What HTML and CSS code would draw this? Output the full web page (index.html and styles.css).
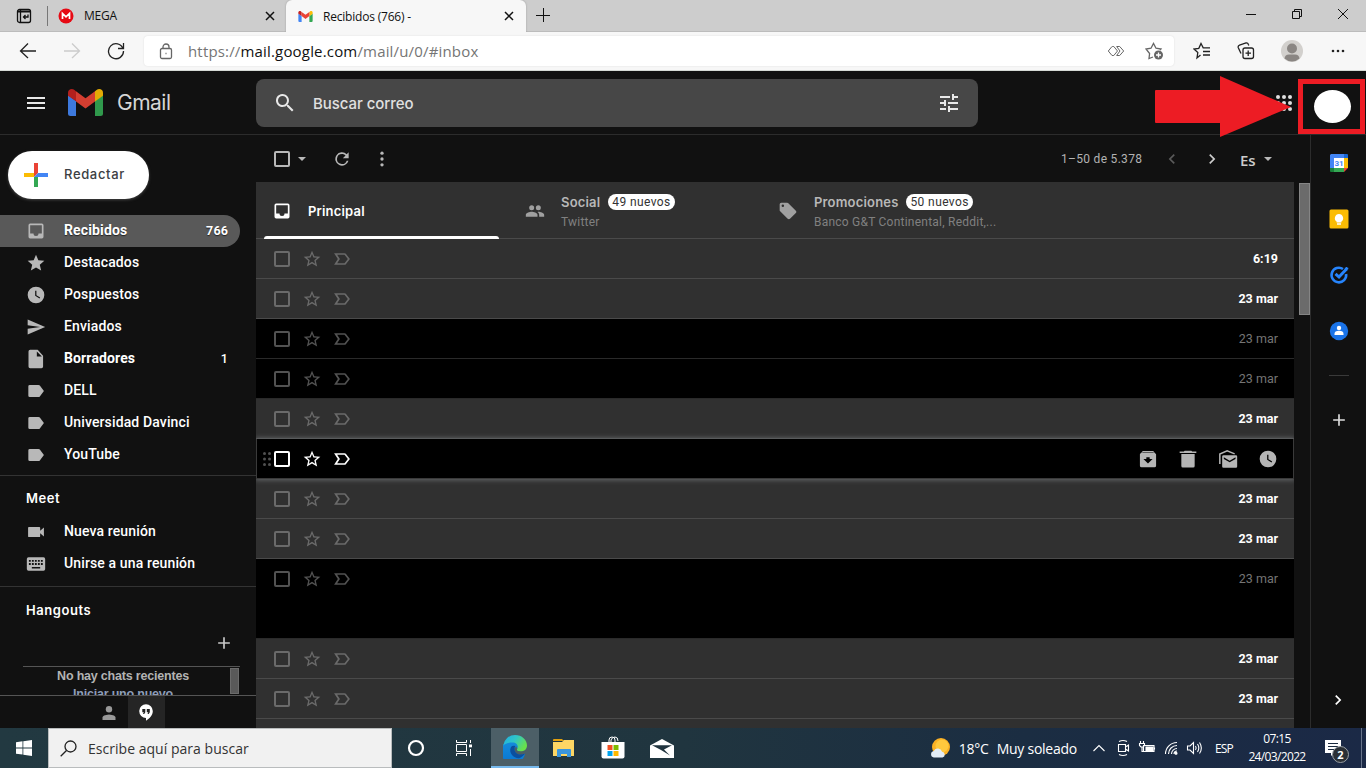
FILE: index.html
```html
<!DOCTYPE html>
<html lang="es">
<head>
  <meta charset="UTF-8">
  <meta name="viewport" content="width=device-width, initial-scale=1.0">
  <title>Recibidos (766) - Gmail</title>
  <link rel="stylesheet" href="styles.css">
</head>
<body>

  <!-- Iconos reutilizados -->
  <svg class="sprite">
    <symbol id="inbox" viewBox="0 0 24 24"><path d="M19 3H5a2 2 0 0 0-2 2v14a2 2 0 0 0 2 2h14a2 2 0 0 0 2-2V5a2 2 0 0 0-2-2zm0 12h-4a3 3 0 0 1-6 0H5V5h14v10z"/></symbol>
    <symbol id="star" viewBox="0 0 24 24"><path d="M12 17.27 18.18 21l-1.64-7.03L22 9.24l-7.19-.61L12 2 9.19 8.63 2 9.24l5.46 4.73L5.82 21z"/></symbol>
    <symbol id="star-line" viewBox="0 0 24 24"><path d="M22 9.24l-7.19-.62L12 2 9.19 8.63 2 9.24l5.46 4.73L5.82 21 12 17.27 18.18 21l-1.63-7.03L22 9.24zM12 15.4l-3.76 2.27 1-4.28-3.32-2.88 4.38-.38L12 6.1l1.71 4.04 4.38.38-3.32 2.88 1 4.28L12 15.4z"/></symbol>
    <symbol id="important" viewBox="0 0 24 24"><path d="M15 19H2.500l4.500-7L2.500 5H15c.65 0 1.260.31 1.630.84L21.500 12l-4.870 6.160c-.37.52-.98.84-1.630.84zm-8.800-2H15l4-5-4-5H6.200l3.300 5z"/></symbol>
    <symbol id="clock" viewBox="0 0 24 24"><path d="M12 2a10 10 0 1 0 0 20 10 10 0 0 0 0-20zm4.200 14.200L11 13V7h1.500v5.200l4.500 2.700z"/></symbol>
    <symbol id="send" viewBox="0 0 24 24"><path d="M2 21l21-9L2 3v7l15 2-15 2z"/></symbol>
    <symbol id="draft" viewBox="0 0 24 24"><path d="M5 1h9l6.500 7v13a2 2 0 0 1-2 2H5a2 2 0 0 1-2-2V3a2 2 0 0 1 2-2zm8 2v6h6z"/></symbol>
    <symbol id="label" viewBox="0 0 24 24"><path d="M16.600 5.400C16.300 5 15.700 4.700 15 4.700H4.500A1.700 1.700 0 0 0 2.800 6.400v11.200a1.700 1.700 0 0 0 1.700 1.700H15c.7 0 1.300-.3 1.600-.8L21.500 12z"/></symbol>
    <symbol id="chevron" viewBox="0 0 24 24"><path d="M10 6 8.600 7.400 13.200 12l-4.600 4.600L10 18l6-6z"/></symbol>
    <symbol id="plus" viewBox="0 0 24 24"><path d="M19 13h-6v6h-2v-6H5v-2h6V5h2v6h6z"/></symbol>
    <symbol id="gmail" viewBox="0 0 35 27">
      <path fill="#4285f4" d="M0 6l8 6v15H2.500A2.500 2.500 0 0 1 0 24.500z"/>
      <path fill="#34a853" d="M27 12l8-6v18.500a2.500 2.500 0 0 1-2.500 2.500H27z"/>
      <path fill="#c5221f" d="M0 3.700C0 .3 3.900-1 6.500 1L8 2.200v10L0 6.800z"/>
      <path fill="#fbbc04" d="M27 2.200 28.500 1C31.200-1 35 .4 35 3.700v3.100l-8 5.800z"/>
      <path fill="#ea4335" d="M8 2.200 17.500 9.300 27 2.200v10.300L17.500 19.500 8 12.500z"/>
    </symbol>
  </svg>

  <div class="tabstrip">
    <div class="tab-actions">
      <svg width="16" height="16" viewBox="0 0 16 16" fill="none" stroke="#111" stroke-width="1.300"><rect x="1.500" y="1.500" width="13" height="13" rx="2"/><path d="M1.500 3.500h13" stroke-width="2"/><path d="M4.500 1.500v13"/><path d="M12 6.500V9H7.500m2-2-2 2 2 2"/></svg>
    </div>
    <div class="tab">
      <svg width="16" height="16" viewBox="0 0 16 16"><circle cx="8" cy="8" r="7.500" fill="#e60a14"/><path d="M4.500 11V5.500L8 8.800l3.500-3.300V11" fill="none" stroke="#fff" stroke-width="1.700"/></svg>
      <span class="tab-title">MEGA</span>
      <svg class="close" width="10" height="10" viewBox="0 0 10 10"><path d="M1 1l8 8M9 1L1 9"/></svg>
    </div>
    <div class="tab active">
      <svg width="15" height="11"><use href="#gmail"/></svg>
      <span class="tab-title">Recibidos (766) -</span>
      <svg class="close" width="10" height="10" viewBox="0 0 10 10"><path d="M1 1l8 8M9 1L1 9"/></svg>
    </div>
    <svg class="new-tab" width="14" height="14" viewBox="0 0 14 14"><path d="M7.500 0v14M0 7.500h14"/></svg>
    <div class="window-controls">
      <svg width="12" height="12" viewBox="0 0 12 12"><path d="M1 6.500h10"/></svg>
      <svg width="12" height="12" viewBox="0 0 12 12"><path d="M1.500 3.500h7v7h-7zM3.500 3.500v-2h7v7h-2"/></svg>
      <svg width="12" height="12" viewBox="0 0 12 12"><path d="M1 1l10 10M11 1L1 11"/></svg>
    </div>
  </div>

  <div class="toolbar">
    <div class="nav-buttons">
      <svg width="18" height="18" viewBox="0 0 18 18"><path d="M17 9H1.500M9 1.500 1.500 9 9 16"/></svg>
      <svg class="disabled" width="18" height="18" viewBox="0 0 18 18"><path d="M1 9h15.500M9 1.500 16.500 9 9 16"/></svg>
      <svg width="18" height="18" viewBox="0 0 18 18"><path d="M16 6.500A7.500 7.500 0 1 0 16.500 9M16.500 1v5.500H11"/></svg>
    </div>
    <div class="address">
      <svg width="14" height="17" viewBox="0 0 14 17"><rect x="1.500" y="5.500" width="11" height="10" rx="1.500"/><path d="M4 5.500V4a3 3 0 0 1 6 0v1.500M6.500 10.500h1"/></svg>
      <div class="url">https://<b>mail.google.com</b>/mail/u/0/#inbox</div>
      <svg width="18" height="12" viewBox="0 0 18 12"><path d="M5.500 1.500h1.300l3.700 4.500-3.700 4.500H5L1.300 6 5 1.500zM9.500 1.500h3.200L16.700 6l-4 4.500H9.500M9.800 10.200 13 6 9.800 1.800" stroke-width="1"/></svg>
      <svg class="fav" width="19" height="18" viewBox="0 0 19 18"><path d="M8 15 4 16.500l.6-5L1 7l5-.8L8.500 1.500 11 6.200l5 .8-1 1.200"/><circle cx="13.500" cy="13" r="4.500" fill="#666" stroke="none"/><path d="M13.500 10.500v5M11 13h5" stroke="#fff"/></svg>
    </div>
    <div class="browser-tools">
      <svg width="18" height="18" viewBox="0 0 18 18"><path d="M7.500 13 4 16l.8-5.500L1 7l4.800-.7L8 1.500l2.200 4.300H17M10 9.500h7M10 13h7"/></svg>
      <svg width="18" height="18" viewBox="0 0 18 18"><rect x="6" y="6" width="10.500" height="10.500" rx="2"/><path d="M11.200 8.500v5.500M8.500 11.200H14M4 11.500 1.200 5.500a2 2 0 0 1 1.300-2.300L9 1a2 2 0 0 1 2.300 1.300l.5 1.200"/></svg>
      <svg class="solid" width="22" height="22" viewBox="0 0 22 22"><circle cx="11" cy="11" r="11" fill="#d2d0cd"/><circle cx="11" cy="8.500" r="5" fill="#8a8683"/><path d="M3.500 18.500Q4 14.500 8 14.500h6q4 0 4.500 4a11 11 0 0 1-15 0z" fill="#8a8683"/></svg>
      <svg class="solid" width="14" height="4" viewBox="0 0 14 4"><circle cx="2" cy="2" r="1.300"/><circle cx="7" cy="2" r="1.300"/><circle cx="12" cy="2" r="1.300"/></svg>
    </div>
  </div>

  <div class="gmail">
    <header class="header">
      <svg class="menu" width="18" height="12" viewBox="0 0 18 12"><path d="M0 1h18M0 6h18M0 11h18"/></svg>
      <svg class="logo" width="35" height="27"><use href="#gmail"/></svg>
      <span class="brand">Gmail</span>
      <div class="search">
        <svg width="24" height="24" viewBox="0 0 24 24"><path d="M15.500 14h-.8l-.3-.3A6.500 6.500 0 1 0 13.700 14.400l.3.300v.8l5 5 1.500-1.500zm-6 0a4.500 4.500 0 1 1 0-9 4.500 4.500 0 0 1 0 9z"/></svg>
        <span>Buscar correo</span>
        <svg width="24" height="24" viewBox="0 0 24 24"><path d="M3 17v2h6v-2H3zM3 5v2h10V5H3zm10 16v-2h8v-2h-8v-2h-2v6h2zM7 9v2H3v2h4v2h2V9H7zm14 4v-2H11v2h10zm-6-4h2V7h4V5h-4V3h-2v6z"/></svg>
      </div>
      <svg class="apps" width="16" height="16" viewBox="0 0 16 16"><circle cx="2" cy="2" r="2"/><circle cx="8" cy="2" r="2"/><circle cx="14" cy="2" r="2"/><circle cx="2" cy="8" r="2"/><circle cx="8" cy="8" r="2"/><circle cx="14" cy="8" r="2"/><circle cx="2" cy="14" r="2"/><circle cx="8" cy="14" r="2"/><circle cx="14" cy="14" r="2"/></svg>
    </header>

    <div class="content">
      <aside class="sidebar">
        <div class="compose">
          <svg width="24" height="24" viewBox="0 0 24 24"><path fill="#ea4335" d="M10 0h4v10l-4 4z"/><path fill="#4285f4" d="M14 10h10v4H10z"/><path fill="#34a853" d="M10 14h4v10h-4z"/><path fill="#fbbc04" d="M0 10h10v4H0z"/></svg>
          <span>Redactar</span>
        </div>
        <div class="folders">
          <div class="folder selected bold"><svg><use href="#inbox"/></svg><span>Recibidos</span><em>766</em></div>
          <div class="folder"><svg><use href="#star"/></svg><span>Destacados</span></div>
          <div class="folder"><svg><use href="#clock"/></svg><span>Pospuestos</span></div>
          <div class="folder"><svg><use href="#send"/></svg><span>Enviados</span></div>
          <div class="folder bold draft"><svg><use href="#draft"/></svg><span>Borradores</span><em>1</em></div>
          <div class="folder"><svg><use href="#label"/></svg><span>DELL</span></div>
          <div class="folder"><svg><use href="#label"/></svg><span>Universidad Davinci</span></div>
          <div class="folder"><svg><use href="#label"/></svg><span>YouTube</span></div>
        </div>
        <div class="meet">
          <h3>Meet</h3>
          <div class="folder"><svg viewBox="0 0 24 24"><path d="M17 10.500V7a1 1 0 0 0-1-1H3.500a1 1 0 0 0-1 1v10a1 1 0 0 0 1 1H16a1 1 0 0 0 1-1v-3.500l4.500 4v-11z"/></svg><span>Nueva reunión</span></div>
          <div class="folder"><svg viewBox="0 0 24 24"><path d="M3 4h18a2 2 0 0 1 2 2v12a2 2 0 0 1-2 2H3a2 2 0 0 1-2-2V6a2 2 0 0 1 2-2z"/><path d="M3.500 8.200h17M3.500 12h17" stroke="#111" stroke-width="2.200" stroke-dasharray="2.200 1.400"/><path d="M7 16.500h10" stroke="#111" stroke-width="1.800"/></svg><span>Unirse a una reunión</span></div>
        </div>
        <div class="hangouts">
          <h3>Hangouts</h3>
          <svg class="add"><use href="#plus"/></svg>
          <div class="chats">
            <div class="chats-text">No hay chats recientes<br><a>Iniciar uno nuevo</a></div>
            <div class="chats-thumb"></div>
          </div>
        </div>
        <div class="chat-tabs">
          <div class="chat-tab"><svg width="14" height="14" viewBox="0 0 14 14" fill="#999"><circle cx="7" cy="3.200" r="3.200"/><path d="M.5 14v-2.500Q.5 9 7 8.500q6.500.5 6.500 3V14z"/></svg></div>
          <div class="chat-tab current"><svg width="14" height="17" viewBox="0 0 14 17"><path fill="#fff" d="M7 .3a6.800 6.800 0 0 0 0 13.600v2.800c3.800-1.900 6.800-5.600 6.800-9.600A6.800 6.800 0 0 0 7 .3z"/><path fill="#222" d="M3.300 5h3v3.200L5.200 10H4l.8-1.700H3.300zM7.800 5h3v3.200L9.700 10H8.500l.8-1.700H7.800z"/></svg></div>
        </div>
      </aside>

      <main class="main">
        <div class="list-tools">
          <i class="box"></i>
          <i class="caret"></i>
          <svg class="refresh" viewBox="0 0 24 24"><path d="M17.650 6.350A8 8 0 1 0 19.730 14h-2.080A6 6 0 1 1 12 6c1.660 0 3.140.69 4.220 1.780L13 11h7V4z"/></svg>
          <svg viewBox="0 0 24 24"><circle cx="12" cy="5" r="2"/><circle cx="12" cy="12" r="2"/><circle cx="12" cy="19" r="2"/></svg>
          <span class="count">1–50 de 5.378</span>
          <svg class="prev"><use href="#chevron"/></svg>
          <svg class="next"><use href="#chevron"/></svg>
          <span class="lang">Es</span>
          <i class="caret"></i>
        </div>
        <div class="list-wrap">
          <div class="list">
            <div class="categories">
              <div class="category current">
                <svg><use href="#inbox"/></svg>
                <div class="category-name">Principal</div>
              </div>
              <div class="category">
                <svg viewBox="0 0 24 24"><path d="M16 11a3 3 0 1 0 0-6 3 3 0 0 0 0 6zm-8 0a3 3 0 1 0 0-6 3 3 0 0 0 0 6zm0 2c-2.300 0-7 1.200-7 3.500V19h14v-2.500C15 14.200 10.300 13 8 13zm8 0-1 .05c1.200.85 2 2 2 3.450V19h6v-2.500c0-2.300-4.700-3.500-7-3.500z"/></svg>
                <div>
                  <div class="category-name">Social <span class="badge">49 nuevos</span></div>
                  <div class="category-from">Twitter</div>
                </div>
              </div>
              <div class="category">
                <svg viewBox="0 0 24 24"><path d="M21.400 11.600l-9-9C12 2.200 11.600 2 11 2H4a2 2 0 0 0-2 2v7c0 .6.2 1 .6 1.400l9 9c.8.8 2 .8 2.800 0l7-7c.8-.8.8-2 0-2.800zM5.800 7.300a1.500 1.500 0 1 1 0-3 1.500 1.500 0 0 1 0 3z"/></svg>
                <div>
                  <div class="category-name">Promociones <span class="badge">50 nuevos</span></div>
                  <div class="category-from">Banco G&amp;T Continental, Reddit,...</div>
                </div>
              </div>
            </div>
            <div class="mail unread"><i class="box"></i><svg><use href="#star-line"/></svg><svg><use href="#important"/></svg><time>6:19</time></div>
            <div class="mail unread"><i class="box"></i><svg><use href="#star-line"/></svg><svg><use href="#important"/></svg><time>23 mar</time></div>
            <div class="mail"><i class="box"></i><svg><use href="#star-line"/></svg><svg><use href="#important"/></svg><time>23 mar</time></div>
            <div class="mail"><i class="box"></i><svg><use href="#star-line"/></svg><svg><use href="#important"/></svg><time>23 mar</time></div>
            <div class="mail unread"><i class="box"></i><svg><use href="#star-line"/></svg><svg><use href="#important"/></svg><time>23 mar</time></div>
            <div class="mail hover">
              <svg class="grip" viewBox="0 0 8 14"><circle cx="1.500" cy="1.500" r="1.500"/><circle cx="6.500" cy="1.500" r="1.500"/><circle cx="1.500" cy="7" r="1.500"/><circle cx="6.500" cy="7" r="1.500"/><circle cx="1.500" cy="12.500" r="1.500"/><circle cx="6.500" cy="12.500" r="1.500"/></svg>
              <i class="box"></i><svg><use href="#star-line"/></svg><svg><use href="#important"/></svg>
              <div class="mail-actions">
                <svg viewBox="0 0 24 24"><path d="M20.500 5.200 19.200 3.500C18.900 3.200 18.500 2.500 18 2.500H6c-.5 0-.9.7-1.200 1L3.400 5.200C2.500 5.800 2.300 6 2.300 6.500V20a2 2 0 0 0 2 2h15.400a2 2 0 0 0 2-2V6.500c0-.5-.8-.9-1.200-1.300zM12 17.500 6.500 12H10v-2h4v2h3.500zM5 4.700l.5-.6h13l.5.600z"/></svg>
                <svg viewBox="0 0 24 24"><path d="M4 20.500A1.800 1.800 0 0 0 5.800 22.300h12.400A1.800 1.800 0 0 0 20 20.500V6H4zM22 3h-5l-1-1H8L7 3H2v1.800h20z"/></svg>
                <svg viewBox="0 0 24 24"><path fill-rule="evenodd" d="M6.500 7.500h15A1.500 1.500 0 0 1 23 9v12a1.500 1.500 0 0 1-1.500 1.500h-15A1.500 1.500 0 0 1 5 21V9a1.500 1.500 0 0 1 1.500-1.500zM7 10v2l7 4 7-4v-2l-7 4z"/><path d="M2.200 18V6L11 2.200l9 3.600" fill="none" stroke="#b5b5b5" stroke-width="1.800"/></svg>
                <svg><use href="#clock"/></svg>
              </div>
            </div>
            <div class="mail unread"><i class="box"></i><svg><use href="#star-line"/></svg><svg><use href="#important"/></svg><time>23 mar</time></div>
            <div class="mail unread"><i class="box"></i><svg><use href="#star-line"/></svg><svg><use href="#important"/></svg><time>23 mar</time></div>
            <div class="mail tall"><i class="box"></i><svg><use href="#star-line"/></svg><svg><use href="#important"/></svg><time>23 mar</time></div>
            <div class="mail unread"><i class="box"></i><svg><use href="#star-line"/></svg><svg><use href="#important"/></svg><time>23 mar</time></div>
            <div class="mail unread"><i class="box"></i><svg><use href="#star-line"/></svg><svg><use href="#important"/></svg><time>23 mar</time></div>
            <div class="mail unread"></div>
          </div>
          <div class="scroll-thumb"></div>
        </div>
      </main>

      <aside class="side-panel">
        <svg viewBox="0 0 20 20"><path fill="#4285f4" d="M2 1h13v4H5v10H1V2z"/><path fill="#1967d2" d="M15 1h3a1 1 0 0 1 1 1v3h-4z"/><path fill="#fbbc04" d="M15 5h4v10h-4z"/><path fill="#188038" d="M1 15h4v4H2a1 1 0 0 1-1-1z"/><path fill="#34a853" d="M5 15h10v4H5z"/><path fill="#ea4335" d="M15 15h4l-4 4z"/><path fill="#fff" d="M5 5h10v10H5z"/><text x="10" y="13" text-anchor="middle">31</text></svg>
        <svg viewBox="0 0 20 20"><rect x=".5" y=".5" width="19" height="19" rx="1.500" fill="#fbbc04"/><path fill="#fff" d="M10 5a4.200 4.200 0 0 0-2.400 7.600v.9h4.800v-.9A4.200 4.200 0 0 0 10 5zM8 14.300h4v1.400H8z"/></svg>
        <svg viewBox="0 0 20 20" fill="none" stroke="#2684fc"><path d="M14 4A7.300 7.300 0 1 0 17.100 9" stroke-width="2.600"/><path d="M6.500 8.800 10 12l7.800-8.300" stroke-width="3"/><path d="M17.500 2v3.500M15.800 3.500h3.500" stroke-width="1.500"/></svg>
        <svg viewBox="0 0 20 20"><circle cx="10" cy="10" r="9.200" fill="#1a73e8"/><circle cx="10" cy="7" r="2.200" fill="#fff"/><path fill="#fff" d="M5.500 14v-1.300q0-2.700 4.500-2.900 4.500.2 4.500 2.900V14z"/></svg>
        <hr>
        <svg class="more" fill="#ddd"><use href="#plus"/></svg>
        <svg class="collapse" fill="#fff"><use href="#chevron"/></svg>
      </aside>
    </div>
  </div>

  <footer class="taskbar">
    <div class="start"><svg width="16" height="16" viewBox="0 0 16 16" fill="#fff"><path d="M0 2.200 6.500 1.300v6.200H0zM7.300 1.200 16 0v7.500H7.300zM0 8.400h6.500v6.200L0 13.700zM7.300 8.400H16V16l-8.700-1.200z"/></svg></div>
    <div class="task-search">
      <svg width="17" height="17" viewBox="0 0 17 17"><circle cx="10.500" cy="6.500" r="5.500"/><path d="M6.500 10.500.7 16.300"/></svg>
      <span>Escribe aquí para buscar</span>
    </div>
    <div class="task cortana"><svg width="18" height="18" viewBox="0 0 18 18"><circle cx="9" cy="9" r="7" fill="none" stroke="#fff" stroke-width="2.200"/></svg></div>
    <div class="task view"><svg width="17" height="16" viewBox="0 0 17 16" fill="none" stroke="#fff"><path d="M.5 0v2.500h10V0M.5 16v-2.500h10V16M.5 4.500h10v7H.5zM14.500 0v3M14.500 9v7"/><path d="M13 4.500h3v2.800h-3z" fill="#fff" stroke="none"/></svg></div>
    <div class="task running">
      <svg width="24" height="24" viewBox="0 0 24 24">
        <defs>
          <linearGradient id="edge-top" x1="0" x2="1" y2=".5"><stop offset="0" stop-color="#1eaee5"/><stop offset=".5" stop-color="#30c5c8"/><stop offset="1" stop-color="#68e04b"/></linearGradient>
          <linearGradient id="edge-side" x2="0" y2="1"><stop offset="0" stop-color="#168ddb"/><stop offset="1" stop-color="#0875d2"/></linearGradient>
        </defs>
        <path fill="url(#edge-side)" d="M.2 10C2 5 10 4 14 8q2 2 1 5l-4 .5q1 7 7 6.500l4-1.500A12 12 0 1 1 .2 10z"/>
        <path fill="url(#edge-top)" d="M.2 10.500A12 12 0 0 1 12 0c7 0 12 5 12 10.500 0 4.500-4 6-6.500 6s-4-1-3.500-2.200c2-3 0-6.800-4.500-6.800-4 0-7.500 1-9.300 3z"/>
        <path fill="#0b4f9e" d="M8 12c-3 6 3 11.500 8 11.200 2.500-.8 4.800-2.500 6-4.700-5 2.500-10.500.5-10.500-4.500q0-2 1-3-3-.8-4.500 1z"/>
        <path fill="#4c5f67" d="M14 11.500q-1 2-.5 3.500 1.500 2 5 1.500h4l-.5 2q-4.500 1.500-8-1-2.500-2-2-5z"/>
      </svg>
    </div>
    <div class="task"><svg width="22" height="18" viewBox="0 0 22 18"><path fill="#e2a00e" d="M0 1a1 1 0 0 1 1-1h8l2 2H0z"/><path fill="#fdd664" d="M0 3h9l2-2h10v16H0z"/><path fill="#3a96dd" d="M4 18v-7a1 1 0 0 1 1-1h12a1 1 0 0 1 1 1v7h-4v-3H8v3z"/></svg></div>
    <div class="task"><svg width="24" height="24" viewBox="0 0 24 24"><path fill="none" stroke="#fff" d="M8 7V4q0-3 3-3t3 3v3M10 6V4q1-3 4-3 3 0 3 4"/><path fill="#fff" d="M.5 6h23v14.500a2 2 0 0 1-2 2h-19a2 2 0 0 1-2-2z"/><path fill="#f25022" d="M6.500 9h5v5h-5z"/><path fill="#7fba00" d="M12.500 9h5v5h-5z"/><path fill="#00a4ef" d="M6.500 15h5v5h-5z"/><path fill="#ffb900" d="M12.500 15h5v5h-5z"/></svg></div>
    <div class="task"><svg width="24" height="19" viewBox="0 0 24 19"><path fill="#fff" d="M0 6.500 12 0l12 6.500V19H0z"/><path fill="#20343f" d="M2 6.300h20l-8 4.200 6 6L11 11z"/></svg></div>

    <div class="weather">
      <svg width="21" height="20" viewBox="0 0 21 20"><circle cx="11" cy="9" r="9" fill="#fbb124"/><circle cx="12" cy="8" r="6.500" fill="#ffc83d"/><path fill="#e3ecf5" d="M3.800 19.500a3.300 3.300 0 0 1 0-6.500 4.500 4.500 0 0 1 8.300.8 2.900 2.900 0 0 1 .4 5.700z"/></svg>
      <span>18°C</span>
      <span>Muy soleado</span>
    </div>
    <div class="tray">
      <svg viewBox="0 0 24 24"><path d="M6.500 15 12 9.500l5.500 5.500"/></svg>
      <svg viewBox="0 0 24 24"><path d="M7.500 8.500h7v7h-7zM14.500 11l3-2v6l-3-2M8 5.500q4-2 8 0M8 18.500q4 2 8 0"/></svg>
      <svg viewBox="0 0 24 24"><path d="M8.500 9.500H19v6H8.500zM19.500 11.500v2M5.500 5v2M8.500 5v2M4.500 7.500h5v2l-1.500 1.500H6L4.500 9.500zM7 11v4.500h2"/><path d="M11 11h7v3.500h-7z" fill="#fff"/></svg>
      <svg viewBox="0 0 24 24"><path d="M6.500 18A11.500 11.500 0 0 1 18 6.500M9.500 18A8.500 8.500 0 0 1 18 9.500M12.500 18a5.500 5.500 0 0 1 5.500-5.500M15 18a3 3 0 0 1 3-3"/><circle cx="17" cy="17.300" r="1" fill="#fff"/></svg>
      <svg viewBox="0 0 24 24"><path d="M4.500 10H7l3.500-3.500v11L7 14H4.500zM12.500 10q1.300 2 0 4M14.500 8q2.600 4 0 8M16.500 6.500q3.700 5.500 0 11"/></svg>
      <span class="lang-code">ESP</span>
      <div class="time">07:15<br>24/03/2022</div>
      <div class="notices">
        <svg width="16" height="16" viewBox="0 0 16 16"><path fill="#fff" d="M0 0h16v13H9l-3 3v-3H0z"/><path d="M3 3.500h10M3 6.500h10M3 9.500h7" stroke="#1c2b40"/></svg>
        <b>2</b>
      </div>
    </div>
    <div class="show-desktop"></div>
  </footer>

  <!-- Flecha y recuadro sobre la cuenta -->
  <svg class="arrow" width="136" height="62" viewBox="0 0 136 62"><path fill="#ed1c24" d="M1 14h64V0l71 31-71 30V47H1a1 1 0 0 1-1-1V15a1 1 0 0 1 1-1z"/></svg>
  <div class="account-mark"><span></span></div>

</body>
</html>
```
FILE: styles.css
```css
* {
  box-sizing: border-box;
}

body {
  margin: 0;
  width: 1366px;
  height: 768px;
  display: flex;
  flex-direction: column;
  overflow: hidden;
  position: relative;
  background: #111;
  font-family: Roboto, "Liberation Sans", sans-serif;
}

svg {
  display: block;
  flex: none;
}

.sprite {
  position: absolute;
  width: 0;
  height: 0;
}

/* Navegador */
.tabstrip {
  height: 32px;
  flex: none;
  display: flex;
  background: #cdcdcd;
  border-bottom: 1px solid #bcbcbc;
  font: 12px "Open Sans", "Noto Sans", sans-serif;
  color: #111;
}

.tab-actions {
  width: 48px;
  height: 20px;
  margin-top: 6px;
  padding: 2px 0 0 16px;
  border-right: 1px solid #777;
}

.tab {
  width: 238px;
  display: flex;
  align-items: center;
  padding: 0 11px 0 10px;
  gap: 10px;
}

.tab.active {
  width: 240px;
  height: 32px;
  padding: 0 12px;
  background: #f7f7f7;
  border-radius: 6px 6px 0 0;
  box-shadow: 0 0 2px #999;
  clip-path: inset(0 -3px 0 -3px);
}

.tab-title {
  flex: 1;
  letter-spacing: -0.2px;
  white-space: nowrap;
}

.close {
  fill: none;
  stroke: #111;
  stroke-width: 1.5;
}

.new-tab {
  margin: 8px 0 0 10px;
  stroke: #111;
}

.window-controls {
  margin-left: auto;
  display: flex;
  gap: 34px;
  padding: 8px 17px 0 0;
}

.window-controls svg {
  fill: none;
  stroke: #111;
}

.toolbar {
  height: 39px;
  flex: none;
  display: flex;
  align-items: center;
  background: #f7f7f7;
  border-bottom: 1px solid #d5dad5;
}

.toolbar svg {
  fill: none;
  stroke: #222;
  stroke-width: 1.3;
}

.toolbar .solid {
  fill: #222;
  stroke: none;
}

.nav-buttons {
  width: 144px;
  display: flex;
  gap: 26px;
  padding-left: 19px;
}

.toolbar .disabled {
  stroke: #ccc;
}

.address {
  width: 1030px;
  height: 30px;
  display: flex;
  align-items: center;
  padding: 0 10px 0 15px;
  background: #fff;
  border-radius: 4px;
  box-shadow: 0 0 2px #ddd;
}

.toolbar .address svg {
  stroke: #666;
}

.url {
  flex: 1;
  margin-left: 15px;
  font: 15px "Open Sans", "Noto Sans", sans-serif;
  letter-spacing: 0.17px;
  color: #757575;
}

.url b {
  font-weight: normal;
  color: #111;
}

.address .fav {
  margin-left: 20px;
}

.browser-tools {
  display: flex;
  align-items: center;
  gap: 26px;
  padding-left: 19px;
}

.browser-tools svg:last-child {
  margin-left: 2px;
}

/* Gmail */
.gmail {
  height: 657px;
  display: flex;
  flex-direction: column;
}

.header {
  height: 64px;
  flex: none;
  display: flex;
  align-items: center;
  padding-left: 27px;
  border-bottom: 1px solid #2c2c2c;
}

.menu {
  stroke: #e8e8e8;
  stroke-width: 2;
}

.logo {
  margin-left: 23px;
  opacity: 0.9;
}

.brand {
  width: 138px;
  margin-left: 14px;
  font: 21px/24px Inter, sans-serif;
  letter-spacing: -0.5px;
  color: #d5d5d5;
}

.search {
  width: 722px;
  height: 48px;
  display: flex;
  align-items: center;
  padding: 0 17px;
  margin-left: 1px;
  background: #474747;
  border-radius: 8px;
  font: 500 15px Inter, sans-serif;
  letter-spacing: -0.05px;
  color: #e0e0e0;
  fill: #e8e8e8;
}

.search span {
  flex: 1;
  margin-left: 16px;
  padding-top: 2px;
}

.apps {
  margin-left: 298px;
  fill: #e0e0e0;
}

.content {
  height: 593px;
  display: flex;
}

.sidebar {
  width: 256px;
  display: flex;
  flex-direction: column;
}

.compose {
  width: 141px;
  height: 48px;
  flex: none;
  margin: 16px 0 0 8px;
  display: flex;
  align-items: center;
  gap: 16px;
  padding-left: 16px;
  border-radius: 24px;
  background: #fff;
  box-shadow: 0 1px 3px #444;
  font: 500 13px Inter, sans-serif;
  letter-spacing: 0.65px;
  color: #3c4043;
}

.compose span {
  padding-bottom: 2px;
}

.folders {
  padding: 16px 0 4px;
  border-bottom: 1px solid #333;
}

.folder {
  width: 240px;
  height: 32px;
  display: flex;
  align-items: center;
  padding: 0 12px 2px 26px;
  color: #fff;
  font-size: 14px;
  font-weight: 500;
  letter-spacing: 0.13px;
}

.folder svg {
  width: 20px;
  height: 20px;
  position: relative;
  top: 1px;
  margin-right: 18px;
  fill: #b8b8b8;
}

.folder span {
  flex: 1;
}

.folder em {
  font-style: normal;
  font-size: 12.5px;
}

.folder.bold {
  font-weight: 700;
}

.folder.selected {
  background: #595959;
  border-radius: 0 16px 16px 0;
  text-shadow: 0 1px 1px #222;
}

.folder.draft em {
  font-weight: 500;
}

.meet,
.hangouts {
  border-bottom: 1px solid #333;
}

.meet {
  height: 111px;
}

.sidebar h3 {
  margin: 0;
  padding: 14px 0 9px 26px;
  font: 600 13px/17px Inter, sans-serif;
  letter-spacing: 0.55px;
  color: #fff;
}

.hangouts {
  height: 109px;
  border-color: #555;
}

.sidebar .hangouts h3 {
  padding-top: 15px;
  padding-bottom: 8px;
}

.hangouts .add {
  width: 20px;
  height: 20px;
  margin: 6px 0 0 214px;
  fill: #c8c8c8;
}

.chats {
  width: 217px;
  height: 29px;
  margin: 13px 0 0 23px;
  display: flex;
  overflow: hidden;
  border-top: 1px solid #555;
}

.chats-text {
  width: 207px;
  padding-right: 7px;
  text-align: center;
  font: 700 12.5px/18px "Liberation Sans", sans-serif;
  letter-spacing: -0.2px;
  color: #b3b3b3;
}

.chats-text a {
  color: #8d9db8;
}

.chats-thumb {
  width: 9px;
  height: 26px;
  margin-top: 1px;
  background: #595959;
  border: 1px solid #6b6b6b;
}

.chat-tabs {
  display: flex;
  height: 32px;
  padding-left: 91px;
}

.chat-tab {
  width: 37px;
  display: flex;
  align-items: center;
  justify-content: center;
  padding-right: 1px;
  padding-top: 1px;
}

.chat-tab.current {
  background: #252525;
}

.main {
  width: 1054px;
}

.list-tools {
  height: 47px;
  display: flex;
  align-items: center;
  padding-left: 18px;
  fill: #b8b8b8;
}

.list-tools svg {
  width: 20px;
  height: 20px;
}

.list-tools .refresh {
  margin: 0 20px 0 26px;
}

.box {
  width: 16px;
  height: 16px;
  flex: none;
  border: 2px solid #6a6a6a;
  border-radius: 2px;
}

.list-tools .box {
  border-color: #b8b8b8;
}

.caret {
  margin-left: 8px;
  border: 4px solid transparent;
  border-top-color: #b8b8b8;
  border-bottom: 0;
}

.count {
  width: 82px;
  margin-left: 669px;
  font-size: 12px;
  letter-spacing: 0.3px;
  white-space: nowrap;
  color: #b3b3b3;
}

.prev {
  margin-left: 19px;
  transform: scaleX(-1);
  fill: #5a5a5a;
}

.next {
  margin-left: 20px;
  fill: #ccc;
}

.lang {
  width: 17px;
  margin-left: 18px;
  padding-top: 3px;
  font: 600 15px "Open Sans", sans-serif;
  color: #ccc;
}

.lang + .caret {
  margin-left: 7px;
}

.list-wrap {
  height: 546px;
  display: flex;
  overflow: hidden;
}

.list {
  width: 1038px;
}

.scroll-thumb {
  width: 11px;
  height: 132px;
  margin: 1px 0 0 5px;
  background: #6b6b6b;
  border: 1px solid #858585;
}

.categories {
  height: 57px;
  display: flex;
  background: #303030;
  border-bottom: 1px solid #4a4a4a;
}

.category {
  width: 253px;
  display: flex;
  align-items: center;
  gap: 16px;
  padding: 2px 0 0 16px;
  position: relative;
  fill: #a0a0a0;
}

.category > div {
  padding-top: 2px;
}

.category svg {
  width: 20px;
  height: 20px;
}

.category.current {
  fill: #fff;
}

.category.current > div {
  padding-top: 0;
}

.category.current::after {
  content: "";
  position: absolute;
  left: 8px;
  bottom: -1px;
  width: 235px;
  height: 3px;
  background: #fff;
  border-radius: 3px 3px 0 0;
}

.category-name {
  display: flex;
  align-items: center;
  gap: 8px;
  font: 600 13px/20px Inter, sans-serif;
  letter-spacing: 0.18px;
  color: #b8b8b8;
}

.category.current .category-name {
  color: #fff;
}

.badge {
  height: 16px;
  padding: 0 4px;
  border-radius: 8px;
  background: #fff;
  font: 12px/16px Roboto, sans-serif;
  letter-spacing: 0.4px;
  color: #333;
}

.category-from {
  font-size: 12px;
  line-height: 20px;
  letter-spacing: 0.23px;
  white-space: nowrap;
  color: #808080;
}

.mail {
  height: 40px;
  display: flex;
  align-items: center;
  padding: 0 16px 0 18px;
  position: relative;
  background: #000;
  border-bottom: 1px solid #2a2a2a;
  color: #757575;
  fill: #525252;
}

.mail svg {
  width: 20px;
  height: 20px;
  margin-left: 10px;
}

.mail .box {
  margin-right: 2px;
  border-color: #525252;
}

.mail time {
  margin-left: auto;
  font-size: 12.5px;
}

.mail.unread {
  background: #303030;
  border-color: #4a4a4a;
  color: #fff;
  fill: #6a6a6a;
}

.mail.unread .box {
  border-color: #6a6a6a;
}

.mail.unread time {
  font-weight: 700;
}

.mail.hover {
  z-index: 1;
  border: 1px solid #3a3a3a;
  border-width: 0 1px 1px;
  padding: 0 15px 0 17px;
  box-shadow: 0 0 5px 1px #66686b;
  clip-path: inset(-6px 0);
  fill: #fff;
}

.mail.hover .box {
  border-color: #fff;
}

.mail .grip {
  width: 8px;
  height: 14px;
  position: absolute;
  left: 6px;
  top: 13px;
  margin: 0;
  fill: #505050;
}

.mail-actions {
  margin-left: auto;
  display: flex;
  gap: 20px;
  fill: #b5b5b5;
}

.mail-actions svg {
  margin: 0;
}

.mail.tall {
  height: 80px;
  align-items: flex-start;
  padding-top: 10px;
}

.mail.tall .box {
  margin-top: 2px;
}

.mail.tall time {
  margin-top: 2px;
}

.side-panel {
  width: 56px;
  display: flex;
  flex-direction: column;
  align-items: center;
  gap: 36px;
  padding-top: 18px;
  border-left: 1px solid #2c2c2c;
}

.side-panel svg {
  width: 20px;
  height: 20px;
}

.side-panel text {
  font: 700 8px Roboto, sans-serif;
  fill: #4285f4;
}

.side-panel hr {
  width: 20px;
  height: 1px;
  margin: -2px 0 -2px;
  border: 0;
  background: #3a3a3a;
}

.side-panel .collapse {
  margin-top: auto;
  margin-right: 2px;
  margin-bottom: 18px;
}

/* Barra de tareas */
.taskbar {
  height: 40px;
  flex: none;
  display: flex;
  background: linear-gradient(90deg, #223941, #20353f 50%, #1b2d42 75%, #1b2946);
  font-family: "Open Sans", "Noto Sans", sans-serif;
  color: #fff;
}

.start,
.task {
  width: 49px;
  display: flex;
  align-items: center;
  justify-content: center;
}

.start {
  width: 48px;
}

.task-search {
  width: 344px;
  display: flex;
  align-items: center;
  gap: 11px;
  padding-left: 11px;
  background: #f1f1f1;
  border: 1px solid #b9bcbd;
  font-size: 14px;
  letter-spacing: 0.03px;
  color: #333;
}

.task-search svg {
  fill: none;
  stroke: #222;
  stroke-width: 1.3;
}

.task.cortana,
.task.view,
.task.running {
  width: 48px;
}

.task.view {
  margin-right: 3px;
}

.task.running {
  background: #4c5f67;
  border-bottom: 2px solid #76b9ed;
}

.weather {
  margin-left: auto;
  margin-right: 10px;
  display: flex;
  align-items: center;
  gap: 8px;
  font-size: 14px;
  letter-spacing: -0.25px;
  white-space: nowrap;
}

.tray {
  display: flex;
  align-items: center;
}

.tray > svg {
  width: 24px;
  height: 24px;
  fill: none;
  stroke: #fff;
  stroke-width: 1.1;
}

.lang-code {
  width: 34px;
  text-align: center;
  font-size: 12px;
  letter-spacing: -0.8px;
}

.time {
  width: 72px;
  text-align: center;
  font-size: 12px;
  line-height: 18px;
  letter-spacing: -0.65px;
}

.notices {
  width: 48px;
  height: 40px;
  padding: 12px 0 0 12px;
  position: relative;
}

.notices b {
  position: absolute;
  left: 19px;
  top: 18px;
  width: 17px;
  height: 17px;
  border: 1px solid #9aa0a5;
  border-radius: 50%;
  background: #2b3036;
  text-align: center;
  font-size: 11px;
  line-height: 15px;
}

.show-desktop {
  width: 5px;
  border-left: 1px solid #68748a;
}

.arrow {
  position: absolute;
  left: 1155px;
  top: 76px;
}

.account-mark {
  position: absolute;
  left: 1298px;
  top: 79px;
  width: 67px;
  height: 55px;
  padding: 6px 0 0 11px;
  border: 5px solid #ed1c24;
}

.account-mark span {
  display: block;
  width: 37px;
  height: 33px;
  border-radius: 50%;
  background: #fff;
}
```
